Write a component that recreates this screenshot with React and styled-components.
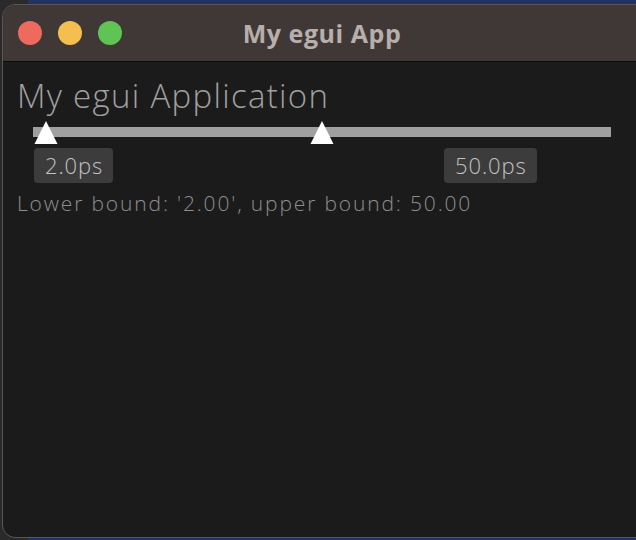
import React from "react";
import styled, { createGlobalStyle } from "styled-components";

const Global = createGlobalStyle`
  html, body { margin: 0; padding: 0; }
  body {
    width: 636px; height: 540px; overflow: hidden;
    background: linear-gradient(to right, #2a2a2a 28px, #213163 28px);
  }
`;

const Desktop = styled.div`
  width: 636px;
  height: 540px;
  padding: 4px 0 0 2px;
  box-sizing: border-box;
  overflow: hidden;
`;

const Window = styled.div`
  width: 660px;
  height: 534px;
  border-radius: 13px;
  border: 1px solid #5a5655;
  box-sizing: border-box;
  overflow: hidden;
  display: flex;
  flex-direction: column;
  background: #1b1b1b;
`;

const TitleBar = styled.div`
  height: 56px;
  flex: none;
  background: #403836;
  border-bottom: 1px solid #0c0c0c;
  display: flex;
  align-items: center;
  position: relative;
  padding-left: 15px;
  gap: 16px;
`;

const Light = styled.span`
  width: 24px;
  height: 24px;
  border-radius: 50%;
  background: ${(p) => p.$c};
  display: block;
`;

const Title = styled.div`
  position: absolute;
  left: 0;
  width: 636px;
  text-align: center;
  font-family: "Open Sans", "Liberation Sans", sans-serif;
  font-weight: 700;
  font-size: 25px;
  color: #b8aeab;
  top: 11px;
  line-height: 34px;
  margin-left: 1px;
  letter-spacing: 0.55px;
`;

const Content = styled.div`
  padding: 14px 0 0 14px;
  display: flex;
  flex-direction: column;
  font-family: "Open Sans", "Noto Sans", sans-serif;
`;

const Heading = styled.div`
  font-size: 33px;
  font-weight: 300;
  color: #a0a0a0;
  line-height: 40px;
  letter-spacing: 1.3px;
`;

const SliderBlock = styled.div`
  position: relative;
  margin-left: 16px;
  width: 578px;
  height: 94px;
  margin-top: 6px;
`;

const Track = styled.div`
  position: absolute;
  left: 0;
  top: 5px;
  width: 578px;
  height: 10px;
  background: #a0a0a0;
`;

const Handle = styled.svg`
  position: absolute;
  top: -2px;
  width: 24px;
  height: 24px;
  margin-left: -12px;
`;

const ValueLabel = styled.div`
  position: absolute;
  top: 26px;
  height: 35px;
  box-sizing: border-box;
  padding: 0 10px 0 11px;
  background: #3c3c3c;
  border-radius: 4px;
  color: #c2c2c2;
  font-size: 22px;
  font-weight: 300;
  line-height: 35px;
  letter-spacing: 0.9px;
`;

const Info = styled.div`
  margin-top: -27px;
  font-size: 21px;
  font-weight: 300;
  color: #8e8e8e;
  line-height: 28px;
  letter-spacing: 1.85px;
`;

const handles = [12.5, 289];
const labels = [
  { text: "2.0ps", left: 1 },
  { text: "50.0ps", left: 411 },
];

export default function App() {
  return (
    <>
      <Global />
      <Desktop>
        <Window>
          <TitleBar>
            <Light $c="#ee6a5e" />
            <Light $c="#f5bf4f" />
            <Light $c="#5fc454" />
            <Title>My egui App</Title>
          </TitleBar>
          <Content>
            <Heading>My egui Application</Heading>
            <SliderBlock>
              <Track />
              {handles.map((x, i) => (
                <Handle key={i} viewBox="0 0 24 24" style={{ left: x }}>
                  <polygon points="12,1 23.5,24 0.5,24" fill="#ffffff" />
                </Handle>
              ))}
              {labels.map((l) => (
                <ValueLabel key={l.text} style={{ left: l.left }}>
                  {l.text}
                </ValueLabel>
              ))}
            </SliderBlock>
            <Info>Lower bound: '2.00', upper bound: 50.00</Info>
          </Content>
        </Window>
      </Desktop>
    </>
  );
}
